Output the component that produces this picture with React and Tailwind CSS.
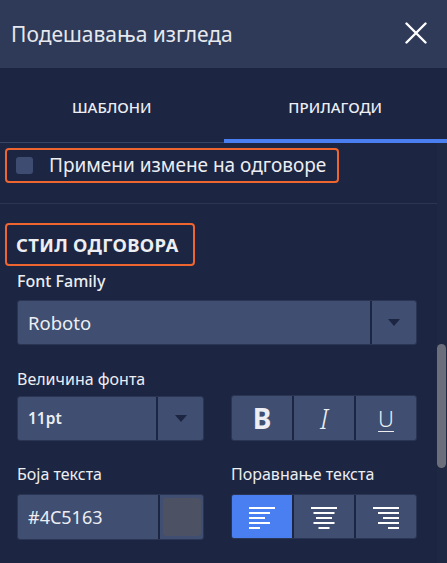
import React from "react";

const font = { fontFamily: '"Noto Sans", "Open Sans", sans-serif' };

const AlignIcon = ({ align }) => {
  const widths = [26, 21, 16, 21, 11];
  return (
    <svg width="26" height="24" viewBox="0 0 26 24">
      {widths.map((w, i) => {
        const x = align === "left" ? 0 : align === "right" ? 26 - w : (26 - w) / 2;
        return <rect key={i} x={x} y={2 + i * 5} width={w} height="2" fill="#ffffff" />;
      })}
    </svg>
  );
};

const Caret = () => (
  <svg width="12" height="8" viewBox="0 0 12 8">
    <path d="M0 0 L12 0 L6 7 Z" fill="#1c2541" />
  </svg>
);

export default function App() {
  return (
    <div className="w-[447px] h-[563px] overflow-hidden bg-[#1c2541] text-[#eceef3]" style={font}>
      {/* header */}
      <div className="h-[68px] bg-[#2e3a58] flex items-center justify-between pl-[11px] pr-[20px]">
        <span className="text-[21px] text-[#e6e8ee] mt-[2px]">Подешавања изгледа</span>
        <svg width="22" height="22" viewBox="0 0 22 22" className="mb-[2px]">
          <path d="M1.5 1.5 L20.5 20.5 M20.5 1.5 L1.5 20.5" stroke="#ffffff" strokeWidth="2.4" strokeLinecap="round" />
        </svg>
      </div>

      {/* tabs */}
      <div className="flex h-[75px]">
        <div className="flex-1 flex items-center justify-center border-b border-[#3a4566] pt-[5px]">
          <span className="text-[15px] font-medium">ШАБЛОНИ</span>
        </div>
        <div className="flex-1 flex items-center justify-center border-b-[4px] border-[#4a7ff2] pt-[8px]">
          <span className="text-[15px] font-medium">ПРИЛАГОДИ</span>
        </div>
      </div>

      <div className="flex h-[420px]">
        <div className="flex-1">
          <div className="pt-[5px] pb-[20px] border-b border-[#2c3652]">
            <div className="ml-[5px] w-[334px] h-[35px] border-2 border-[#ef6530] rounded-[4px] flex items-center pl-[9px]">
              <span className="w-[17px] h-[17px] rounded-[3px] bg-[#3f4c72]"></span>
              <span className="ml-[16px] text-[19px] leading-none">Примени измене на одговоре</span>
            </div>
          </div>

          <div className="ml-[5px] mt-[19px] w-[190px] h-[43px] border-2 border-[#ef6530] rounded-[4px] flex items-center pl-[9px]">
            <span className="text-[18.5px] font-bold tracking-[0.3px]">СТИЛ ОДГОВОРА</span>
          </div>

          <div className="pl-[17px] pr-[20px]">
            <div className="mt-[5px] text-[16px] font-medium leading-[20px]">Font Family</div>
            <div className="mt-[9px] h-[45px] flex rounded-[3px] bg-[#3f4e71] border border-[#2a3553]">
              <div className="flex-1 flex items-center pl-[10px] text-[18.5px]">Roboto</div>
              <div className="w-[46px] border-l-2 border-[#1c2541] flex items-center justify-center">
                <Caret />
              </div>
            </div>

            <div className="mt-[24px] text-[16px] leading-[20px]">Величина фонта</div>
            <div className="mt-[7px] flex gap-[27px]">
              <div className="w-[187px] h-[45px] flex rounded-[3px] bg-[#3f4e71] border border-[#2a3553]">
                <div className="flex-1 flex items-center pl-[10px] text-[15.5px] font-semibold">11pt</div>
                <div className="w-[47px] border-l-2 border-[#1c2541] flex items-center justify-center">
                  <Caret />
                </div>
              </div>
              <div className="w-[186px] h-[46px] -mt-[1px] flex rounded-[3px] bg-[#3f4e71] border border-[#2a3553] overflow-hidden">
                <div className="flex-1 flex items-center justify-center text-[28px] font-bold leading-none">B</div>
                <div className="flex-1 flex items-center justify-center border-l-2 border-[#1c2541]">
                  <span className="text-[27px] italic font-light leading-none">I</span>
                </div>
                <div className="flex-1 flex items-center justify-center border-l-2 border-[#1c2541]">
                  <span className="text-[22px] font-light leading-none underline underline-offset-[4px] decoration-1">U</span>
                </div>
              </div>
            </div>

            <div className="mt-[23px] flex gap-[27px]">
              <div className="w-[187px] text-[16px] leading-[20px]">Боја текста</div>
              <div className="text-[16px] leading-[20px]">Поравнање текста</div>
            </div>
            <div className="mt-[10px] flex gap-[27px]">
              <div className="w-[187px] h-[46px] flex rounded-[3px] bg-[#3f4e71] border border-[#2a3553]">
                <div className="flex-1 flex items-center pl-[10px] text-[18px]">#4C5163</div>
                <div className="w-[45px] border-l-2 border-[#1c2541] flex items-center justify-center">
                  <span className="w-[38px] h-[38px] rounded-[3px] bg-[#4c5163]"></span>
                </div>
              </div>
              <div className="w-[186px] h-[45px] flex rounded-[3px] bg-[#3f4e71] border border-[#2a3553] overflow-hidden">
                <div className="flex-1 flex items-center justify-center bg-[#4a7ff2]">
                  <AlignIcon align="left" />
                </div>
                <div className="flex-1 flex items-center justify-center border-l-2 border-[#1c2541]">
                  <AlignIcon align="center" />
                </div>
                <div className="flex-1 flex items-center justify-center border-l-2 border-[#1c2541]">
                  <AlignIcon align="right" />
                </div>
              </div>
            </div>
          </div>
        </div>

        {/* scrollbar */}
        <div className="w-[10px] bg-[#1f2843] pt-[201px]">
          <div className="w-[9px] h-[124px] rounded-full bg-[#6b6f7b]"></div>
        </div>
      </div>
    </div>
  );
}
